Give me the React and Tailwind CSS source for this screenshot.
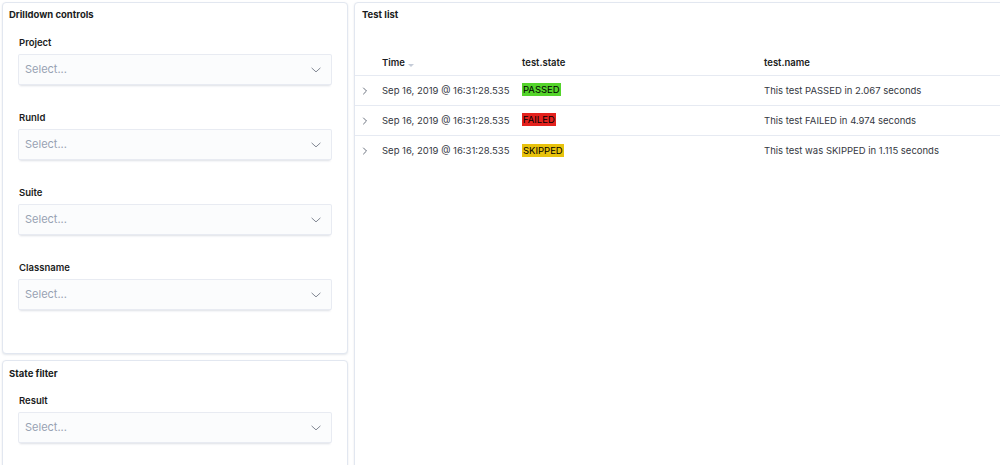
import React from "react";

const Chevron = () => (
  <svg width="12" height="12" viewBox="0 0 16 16" fill="none" className="shrink-0">
    <path d="M2.5 5.5 L8 10.5 L13.5 5.5" stroke="#69707d" strokeWidth="1.1" strokeLinecap="round" strokeLinejoin="round" />
  </svg>
);

const Select = ({ label }) => (
  <div className="flex flex-col">
    <div className="text-[9.5px] leading-[16px] font-semibold text-[#1a1c21] pl-[1px]">{label}</div>
    <div className="mt-[3px] h-[31px] flex items-center justify-between pl-[7px] pr-[10px] bg-[#fbfcfd] rounded-[2px] shadow-[0_1px_1px_-1px_rgba(152,162,179,0.3),0_3px_2px_-2px_rgba(152,162,179,0.3),inset_0_0_0_1px_rgba(15,39,118,0.08)]">
      <span className="text-[11px] text-[#98a2b3]">Select...</span>
      <Chevron />
    </div>
  </div>
);

const Panel = ({ className, children }) => (
  <div className={"bg-white border border-[#e2e7f0] rounded-[4px] shadow-[0_1px_2px_rgba(152,162,179,0.25)] " + className}>
    {children}
  </div>
);

const rows = [
  { state: "PASSED", bg: "bg-[#54d42b]", name: "This test PASSED in 2.067 seconds" },
  { state: "FAILED", bg: "bg-[#e4221e]", name: "This test FAILED in 4.974 seconds" },
  { state: "SKIPPED", bg: "bg-[#e8c20c]", name: "This test was SKIPPED in 1.115 seconds" },
];

export default function App() {
  return (
    <div className="h-[465px] w-[1000px] overflow-hidden bg-white flex gap-[6px] pt-[2px] pl-[2px]" style={{ fontFamily: "Inter, 'Noto Sans', sans-serif" }}>
      <div className="w-[346px] shrink-0 flex flex-col gap-[6px]">
        <Panel className="h-[352px] shrink-0 pt-[4px] px-[15px]">
          <div className="text-[9.5px] leading-[16px] font-bold text-[#1a1c21] -ml-[9px]">Drilldown controls</div>
          <div className="mt-[12px] flex flex-col gap-[25px]">
            <Select label="Project" />
            <Select label="RunId" />
            <Select label="Suite" />
            <Select label="Classname" />
          </div>
        </Panel>
        <Panel className="h-[200px] shrink-0 pt-[5px] px-[15px]">
          <div className="text-[9.5px] leading-[16px] font-bold text-[#1a1c21] -ml-[9px]">State filter</div>
          <div className="mt-[11px]">
            <Select label="Result" />
          </div>
        </Panel>
      </div>
      <Panel className="w-[700px] h-[600px] shrink-0 pt-[4px]">
        <div className="text-[9.5px] leading-[16px] font-bold text-[#1a1c21] pl-[7px]">Test list</div>
        <div className="mt-[31px] text-[9.5px] text-[#343741]">
          <div className="flex items-end h-[22px] pb-[4px] border-b border-[#e6eaf2]">
            <div className="w-[27px] shrink-0" />
            <div className="w-[140px] shrink-0 flex items-center font-semibold text-[#1a1c21] leading-[16px]">
              Time
              <svg width="10" height="10" viewBox="0 0 10 10" className="ml-[1px] mt-[3px]">
                <path d="M2 4 L8 4 L5 7 Z" fill="#c5ccd8" />
              </svg>
            </div>
            <div className="w-[242px] shrink-0 font-semibold text-[#1a1c21] leading-[16px]">test.state</div>
            <div className="font-semibold text-[#1a1c21] leading-[16px]">test.name</div>
          </div>
          {rows.map((r, i) => (
            <div key={r.state} className={"flex items-center h-[30px] " + (i < rows.length - 1 ? "border-b border-[#e6eaf2]" : "")}>
              <div className="w-[27px] shrink-0 flex justify-start pl-[6px]">
                <svg width="8" height="10" viewBox="0 0 8 10">
                  <path d="M2.5 2 L5.5 5 L2.5 8" stroke="#69707d" strokeWidth="1" fill="none" strokeLinecap="round" strokeLinejoin="round" />
                </svg>
              </div>
              <div className="w-[140px] shrink-0 leading-[16px] whitespace-nowrap">Sep 16, 2019 @ 16:31:28.535</div>
              <div className="w-[242px] shrink-0">
                <span className={"inline-block leading-[13px] px-[1px] text-black " + r.bg}>{r.state}</span>
              </div>
              <div className="leading-[16px] whitespace-nowrap">{r.name}</div>
            </div>
          ))}
        </div>
      </Panel>
    </div>
  );
}
